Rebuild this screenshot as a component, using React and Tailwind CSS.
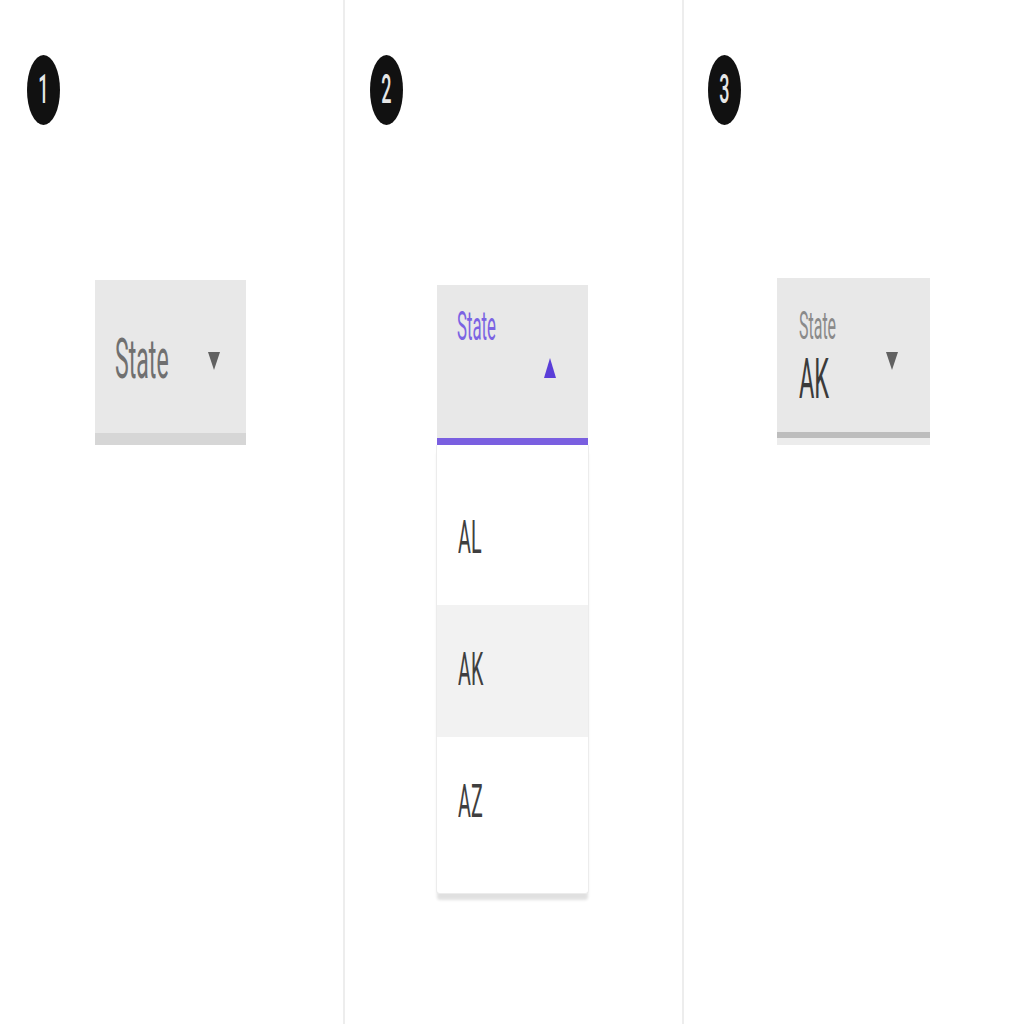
import React from 'react';

const font = { fontFamily: 'Roboto, "Liberation Sans", sans-serif' };

// narrow text, like the squeezed screenshot
const Sq = ({ children, className = '' }) => (
  <span className={`inline-block origin-left scale-x-[0.42] whitespace-nowrap leading-none ${className}`}>{children}</span>
);

const Badge = ({ n }) => (
  <div className="w-[33px] h-[70px] rounded-[50%] bg-[#111] flex items-center justify-center">
    <span className="inline-block scale-x-[0.45] text-[#e6e6e6] font-medium text-[40px] leading-none">{n}</span>
  </div>
);

const ArrowDown = ({ color = '#616161' }) => (
  <svg width="12" height="18" viewBox="0 0 12 18">
    <path d="M0 0 H12 L6 18 Z" fill={color} />
  </svg>
);

const ArrowUp = ({ color = '#5a3ed8' }) => (
  <svg width="12" height="20" viewBox="0 0 12 20">
    <path d="M6 0 L12 20 H0 Z" fill={color} />
  </svg>
);

const Divider = () => <div className="w-[2px] bg-[#ededed]" />;

const SelectClosed = () => (
  <div className="w-[151px] ml-[95px] mt-[155px]">
    <div className="h-[153px] bg-[#e8e8e8] flex items-start pl-[20px] pt-[52px]">
      <div className="w-[93px]">
        <Sq className="text-[55px] text-[#707070]">State</Sq>
      </div>
      <div className="mt-[20px]"><ArrowDown /></div>
    </div>
    <div className="h-[12px] bg-[#d6d6d6]" />
  </div>
);

const options = ['AL', 'AK', 'AZ'];

const SelectOpen = () => (
  <div className="w-[153px] ml-[91px] mt-[160px]">
    <div className="mx-[1px] h-[153px] bg-[#e8e8e8] flex flex-col pl-[20px] pt-[22px]">
      <Sq className="text-[40px] text-[#7b63e3]">State</Sq>
      <div className="flex justify-end pr-[32px] mt-[11px]"><ArrowUp /></div>
    </div>
    <div className="mx-[1px] h-[7px] bg-[#7a5fe0]" />
    <div className="bg-white border-x border-b border-[#ececec] rounded-b-[4px] pt-[28px] pb-[24px] shadow-[0_7px_3px_-1px_rgba(0,0,0,0.12)]">
      {options.map((o) => (
        <div key={o} className={`h-[132px] flex items-center pl-[21px] pb-[6px] ${o === 'AK' ? 'bg-[#f2f2f2]' : ''}`}>
          <Sq className="text-[47px] text-[#3f3f3f]">{o}</Sq>
        </div>
      ))}
    </div>
  </div>
);

const SelectFilled = () => (
  <div className="w-[153px] ml-[93px] mt-[153px]">
    <div className="h-[154px] bg-[#e8e8e8] flex items-start pl-[22px] pt-[29px]">
      <div className="w-[87px] flex flex-col">
        <Sq className="text-[38px] text-[#8a8a8a]">State</Sq>
        <Sq className="text-[56px] text-[#3a3a3a] mt-[6px]">AK</Sq>
      </div>
      <div className="mt-[45px]"><ArrowDown /></div>
    </div>
    <div className="h-[6px] bg-[#bdbdbd]" />
    <div className="h-[7px] bg-[#ececec]" />
  </div>
);

export default function App() {
  return (
    <div className="w-[1024px] h-[1024px] bg-white flex overflow-hidden" style={font}>
      <div className="w-[343px] flex flex-col pt-[55px]">
        <div className="pl-[27px]"><Badge n="1" /></div>
        <SelectClosed />
      </div>
      <Divider />
      <div className="w-[337px] flex flex-col pt-[55px]">
        <div className="pl-[25px]"><Badge n="2" /></div>
        <SelectOpen />
      </div>
      <Divider />
      <div className="flex-1 flex flex-col pt-[55px]">
        <div className="pl-[24px]"><Badge n="3" /></div>
        <SelectFilled />
      </div>
    </div>
  );
}
